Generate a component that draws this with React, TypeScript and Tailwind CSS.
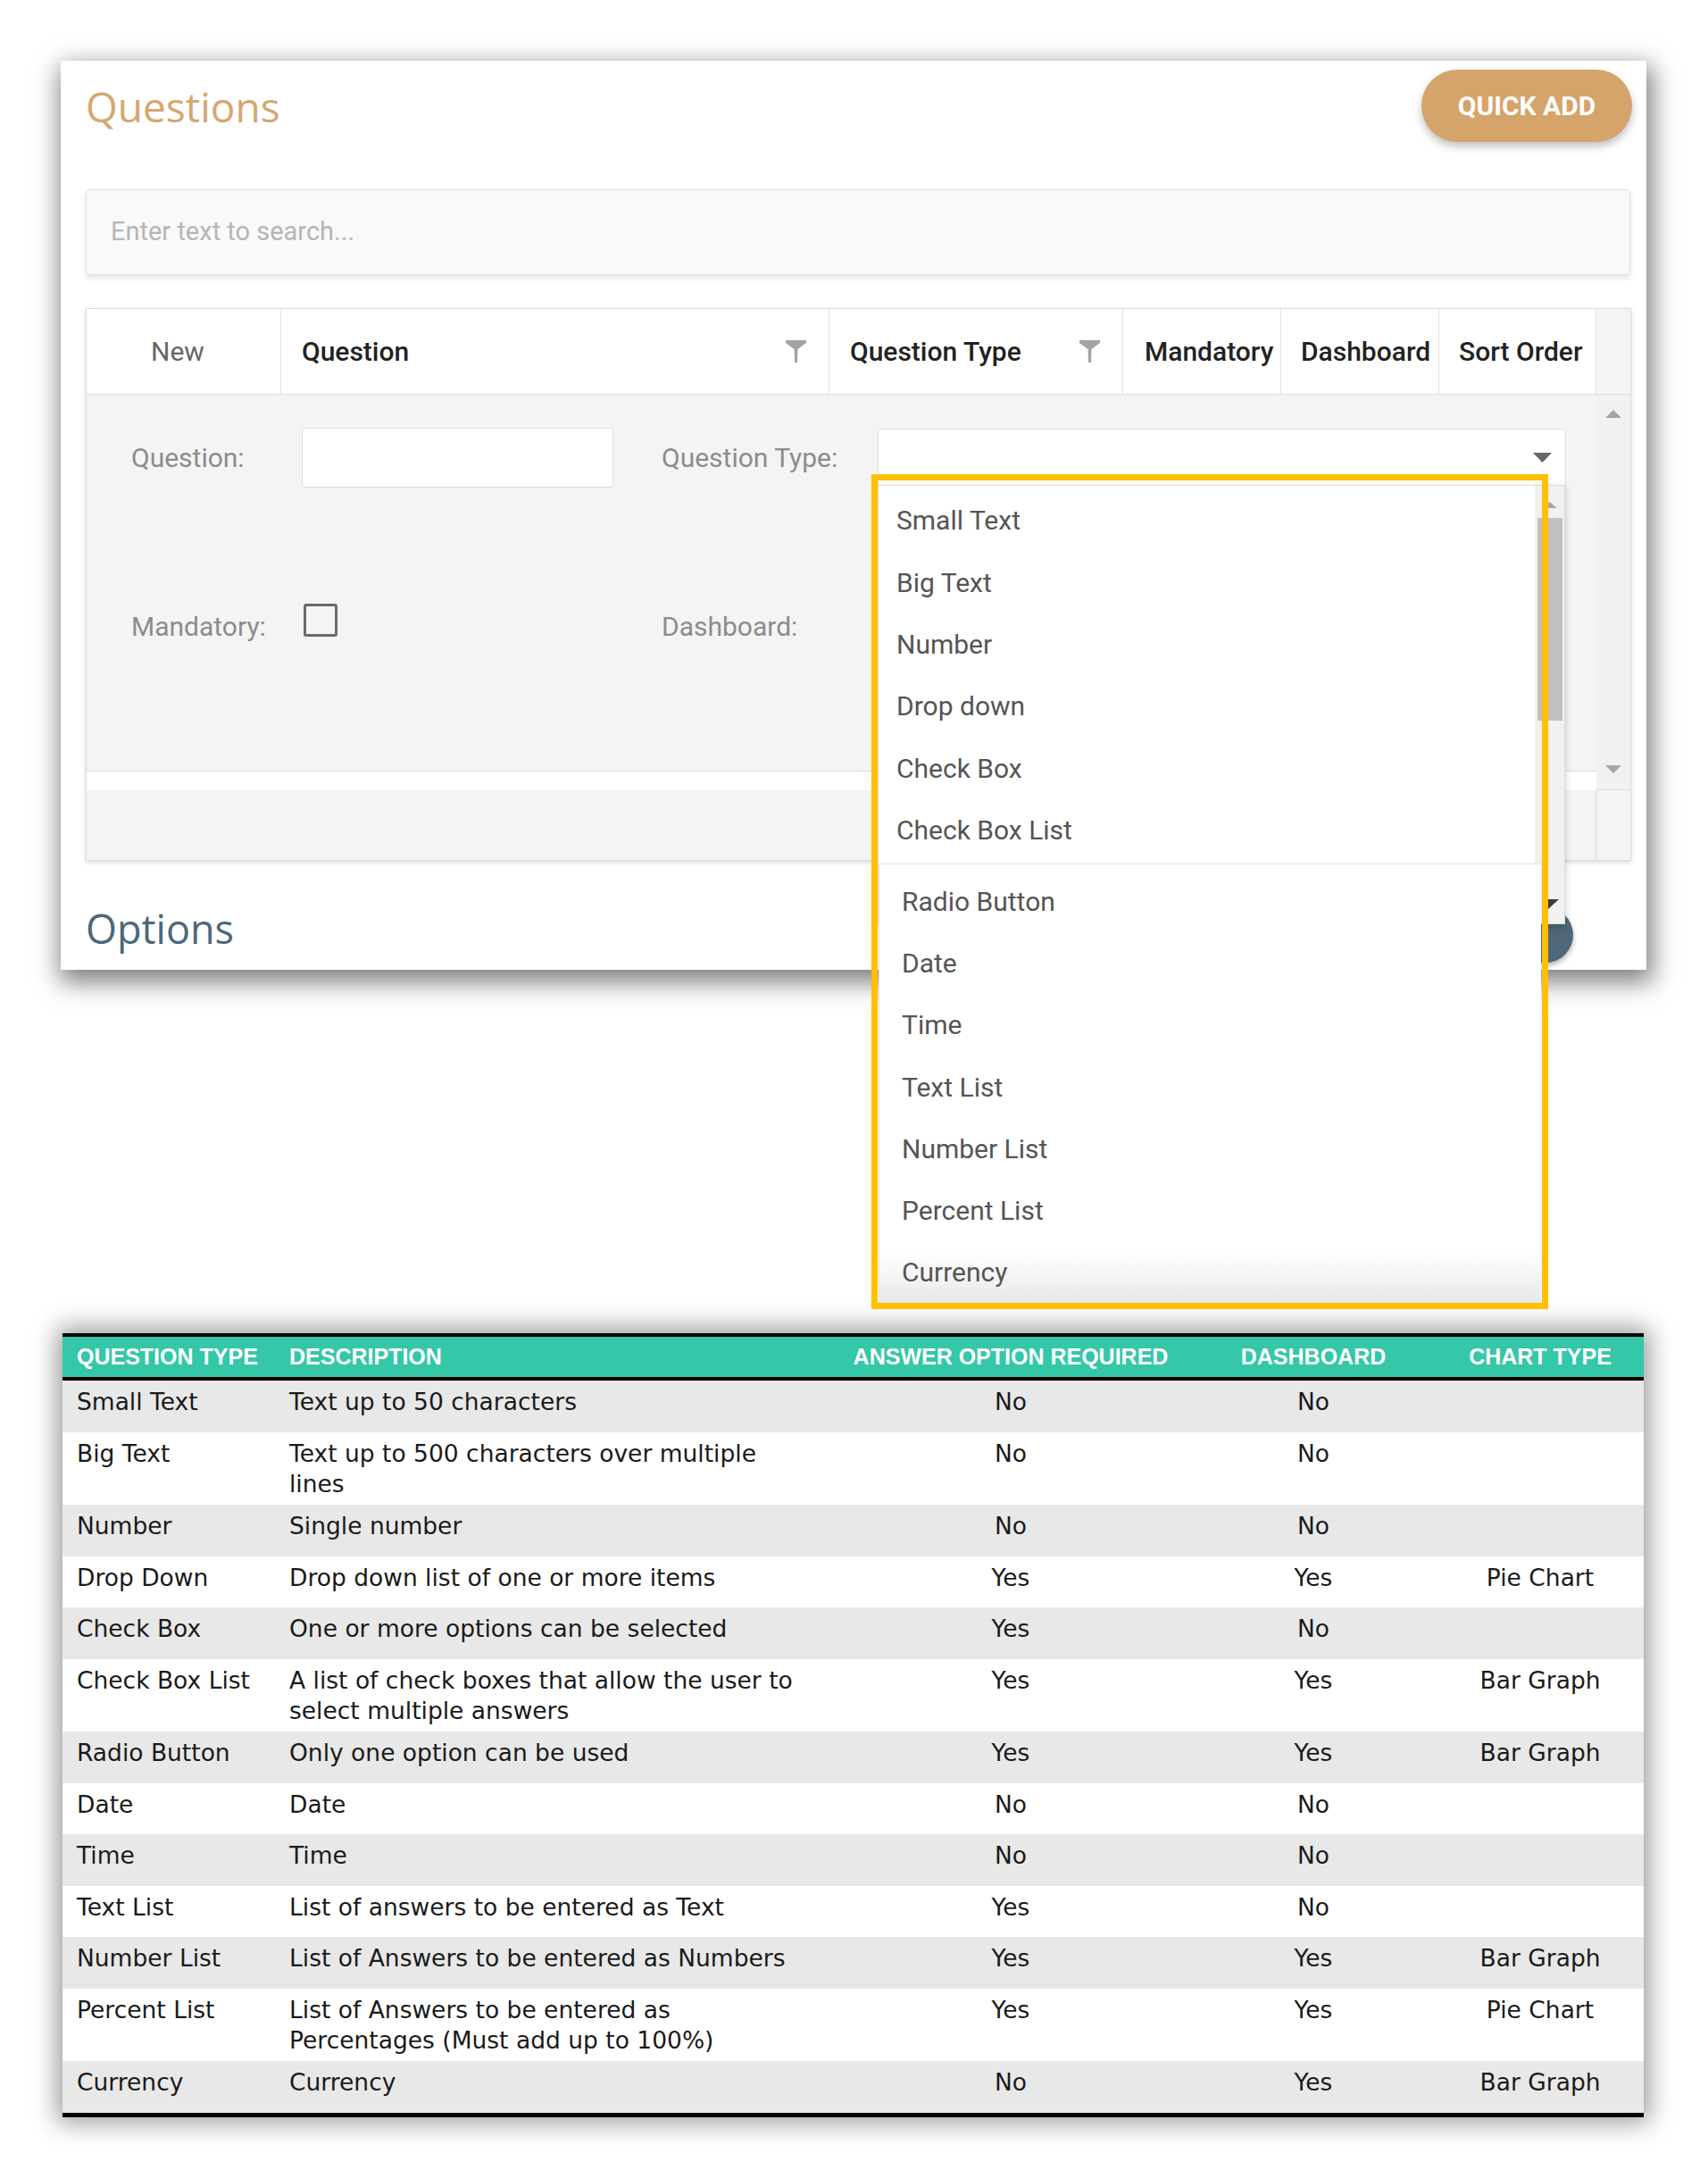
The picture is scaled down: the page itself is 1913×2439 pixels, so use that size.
import React from "react";

type Row = {
  type: string;
  desc: string[];
  req: string;
  dash: string;
  chart: string;
};

const ROWS: Row[] = [
  { type: "Small Text", desc: ["Text up to 50 characters"], req: "No", dash: "No", chart: "" },
  { type: "Big Text", desc: ["Text up to 500 characters over multiple", "lines"], req: "No", dash: "No", chart: "" },
  { type: "Number", desc: ["Single number"], req: "No", dash: "No", chart: "" },
  { type: "Drop Down", desc: ["Drop down list of one or more items"], req: "Yes", dash: "Yes", chart: "Pie Chart" },
  { type: "Check Box", desc: ["One or more options can be selected"], req: "Yes", dash: "No", chart: "" },
  { type: "Check Box List", desc: ["A list of check boxes that allow the user to", "select multiple answers"], req: "Yes", dash: "Yes", chart: "Bar Graph" },
  { type: "Radio Button", desc: ["Only one option can be used"], req: "Yes", dash: "Yes", chart: "Bar Graph" },
  { type: "Date", desc: ["Date"], req: "No", dash: "No", chart: "" },
  { type: "Time", desc: ["Time"], req: "No", dash: "No", chart: "" },
  { type: "Text List", desc: ["List of answers to be entered as Text"], req: "Yes", dash: "No", chart: "" },
  { type: "Number List", desc: ["List of Answers to be entered as Numbers"], req: "Yes", dash: "Yes", chart: "Bar Graph" },
  { type: "Percent List", desc: ["List of Answers to be entered as", "Percentages (Must add up to 100%)"], req: "Yes", dash: "Yes", chart: "Pie Chart" },
  { type: "Currency", desc: ["Currency"], req: "No", dash: "Yes", chart: "Bar Graph" },
];

const LIST_TOP = ["Small Text", "Big Text", "Number", "Drop down", "Check Box", "Check Box List"];
const LIST_BOTTOM = ["Radio Button", "Date", "Time", "Text List", "Number List", "Percent List", "Currency"];

function Funnel() {
  return (
    <svg width="23" height="25" viewBox="0 0 23 25">
      <polygon points="0,0 23,0 23,3 13.5,10 13,25 10,25 9.5,10 0,3" fill="#a3a3a3" />
    </svg>
  );
}

function Arrow({ up, color, w, h }: { up?: boolean; color: string; w: number; h: number }) {
  return (
    <svg width={w} height={h} viewBox={`0 0 ${w} ${h}`}>
      {up ? (
        <polygon points={`0,${h} ${w},${h} ${w / 2},0`} fill={color} />
      ) : (
        <polygon points={`0,0 ${w},0 ${w / 2},${h}`} fill={color} />
      )}
    </svg>
  );
}

function HeaderCell({ label, width, filter }: { label: string; width: string; filter?: boolean }) {
  return (
    <div className={`${width} flex h-full items-center justify-between border-r border-[#e2e2e2] pl-[23px] pr-[25px]`}>
      <span className="text-[30px] font-medium text-[#222]">{label}</span>
      {filter && <Funnel />}
    </div>
  );
}

function QuestionsCard() {
  return (
    <div className="relative flex h-[1018px] w-[1776px] flex-col bg-white pl-[28px] pr-[18px] font-['Roboto',sans-serif] shadow-[3px_10px_26px_4px_rgba(0,0,0,0.5)]">
      {/* Title + quick add */}
      <div className="flex items-center justify-between pt-[10px]">
        <h1 className="font-['Open_Sans',sans-serif] text-[46px] leading-[62px] text-[#d5a670]">Questions</h1>
        <button className="mr-[-2px] flex h-[81px] w-[236px] items-center justify-center rounded-full bg-[#d4a46b] text-[30px] font-bold text-white shadow-[0_5px_10px_rgba(0,0,0,0.25)]">
          QUICK ADD
        </button>
      </div>

      {/* Search */}
      <div className="mt-[53px] flex h-[96px] items-center rounded-[5px] border border-[#e3e3e3] bg-[#f9f9f9] pl-[27px] shadow-[0_3px_6px_rgba(0,0,0,0.12)]">
        <span className="text-[29px] text-[#b5b5b5]">Enter text to search...</span>
      </div>

      {/* Grid */}
      <div className="mt-[37px] flex w-[1731px] flex-col border border-[#dcdcdc] bg-white shadow-[0_2px_5px_rgba(0,0,0,0.15)]">
        <div className="flex h-[96px] border-b border-[#dcdcdc]">
          <div className="flex h-full w-[218px] items-center border-r border-[#e2e2e2] pl-[72px]">
            <span className="text-[30px] text-[#666]">New</span>
          </div>
          <HeaderCell label="Question" width="w-[614px]" filter />
          <HeaderCell label="Question Type" width="w-[329px]" filter />
          <div className="flex h-full w-[177px] items-center border-r border-[#e2e2e2] pl-[24px]">
            <span className="text-[30px] font-medium text-[#222]">Mandatory</span>
          </div>
          <div className="flex h-full w-[177px] items-center border-r border-[#e2e2e2] pl-[22px]">
            <span className="text-[30px] font-medium text-[#222]">Dashboard</span>
          </div>
          <div className="flex h-full w-[176px] items-center border-r border-[#e2e2e2] pl-[22px]">
            <span className="text-[30px] font-medium text-[#222]">Sort Order</span>
          </div>
          <div className="h-full flex-1 bg-[#f4f4f4]" />
        </div>

        <div className="flex h-[443px]">
          <div className="flex w-[1691px] flex-col">
            <div className="h-[422px] border-b border-[#dcdcdc] bg-[#f4f4f4] pl-[50px] pt-[37px] text-[30px] text-[#8c8c8c]">
              <div className="flex h-[67px] items-center">
                <span className="w-[191px]">Question:</span>
                <div className="h-[67px] w-[349px] rounded-[3px] border border-[#dedede] bg-white" />
                <span className="ml-[54px] w-[242px]">Question Type:</span>
                <div className="flex h-[66px] w-[771px] items-center justify-end rounded-[3px] border border-[#dedede] bg-white pr-[15px]">
                  <Arrow color="#666" w={21} h={11} />
                </div>
              </div>
              <div className="mt-[130px] flex items-start">
                <span className="w-[191px] leading-[52px]">Mandatory:</span>
                <div className="ml-[2px] h-[37px] w-[38px] rounded-[3px] border-[3px] border-[#6a6a6a]" />
                <span className="ml-[363px] leading-[52px]">Dashboard:</span>
              </div>
            </div>
            <div className="flex-1 bg-white" />
          </div>
          <div className="flex flex-1 flex-col items-center justify-between border-b border-[#dcdcdc] bg-[#f1f1f1] pb-[18px] pt-[17px]">
            <Arrow up color="#a5a5a5" w={18} h={9} />
            <Arrow color="#a5a5a5" w={18} h={9} />
          </div>
        </div>

        <div className="flex h-[78px] bg-[#f4f4f4]">
          <div className="w-[1691px] border-r border-[#dcdcdc]" />
        </div>
      </div>

      <h2 className="mt-[46px] font-['Open_Sans',sans-serif] text-[45px] leading-[60px] text-[#4b6879]">Options</h2>

      {/* floating action button partly hidden by the list */}
      <div className="absolute left-[1632px] top-[948px] h-[62px] w-[62px] rounded-full bg-[#4f6778] shadow-[0_3px_6px_rgba(0,0,0,0.3)]" />
    </div>
  );
}

function TypeDropdown() {
  return (
    <>
      {/* first view of the list */}
      <div className="absolute left-[983px] top-[543px] flex h-[492px] w-[770px] border border-[#dddddd] bg-white font-['Roboto',sans-serif] shadow-[0_3px_8px_rgba(0,0,0,0.2)]">
        <div className="flex w-[735px] flex-col pt-[4px]">
          {LIST_TOP.map((t) => (
            <div key={t} className="flex h-[69.4px] items-center pl-[20px] text-[30px] text-[#555]">
              {t}
            </div>
          ))}
        </div>
        <div className="flex flex-1 flex-col items-center bg-[#f1f1f1] pt-[18px]">
          <Arrow up color="#a5a5a5" w={17} h={7} />
          <div className="mt-[11px] h-[227px] w-[28px] bg-[#c1c1c1]" />
        </div>
      </div>
      <svg className="absolute left-[1734px] top-[1007px]" width="12" height="11" viewBox="0 0 12 11">
        <polygon points="0,0 12,0 0,11" fill="#3d3d3d" />
      </svg>

      {/* second, scrolled view of the list */}
      <div className="absolute left-[984px] top-[967px] flex h-[496px] w-[742px] flex-col border-l border-t border-[#e0e0e0] bg-[linear-gradient(to_bottom,#ffffff_88%,#e6e6e6_100%)] pt-[7px] font-['Roboto',sans-serif]">
        {LIST_BOTTOM.map((t) => (
          <div key={t} className="flex h-[69.2px] items-center pl-[25px] text-[30px] text-[#555]">
            {t}
          </div>
        ))}
      </div>

      {/* highlight */}
      <div className="pointer-events-none absolute left-[976px] top-[531px] h-[935px] w-[758px] border-[7px] border-[#ffc000]" />
    </>
  );
}

function TypeTable() {
  return (
    <div className="ml-[70px] mt-[407px] w-[1771px] border-b-[5px] border-t-[4px] border-black bg-white font-['DejaVu_Sans',sans-serif] shadow-[0_0_26px_6px_rgba(0,0,0,0.4)]">
      <div className="grid h-[49px] grid-cols-[238px_623px_402px_276px_232px] items-center border-b-[4px] border-black bg-[#34c7a8] font-['Liberation_Sans',sans-serif] text-[25px] font-bold text-white">
        <span className="pl-[16px]">QUESTION TYPE</span>
        <span className="pl-[16px]">DESCRIPTION</span>
        <span className="text-center">ANSWER OPTION REQUIRED</span>
        <span className="text-center">DASHBOARD</span>
        <span className="text-center">CHART TYPE</span>
      </div>
      {ROWS.map((r, i) => (
        <div
          key={r.type}
          className={`grid grid-cols-[238px_623px_402px_276px_232px] pt-[7px] text-[26.5px] leading-[34px] text-[#1a1a1a] ${
            r.desc.length > 1 ? "h-[81.5px]" : "h-[57.5px]"
          } ${i % 2 === 0 ? "bg-[#e8e8e8]" : "bg-white"}`}
        >
          <span className="pl-[16px] whitespace-nowrap">{r.type}</span>
          <div className="flex flex-col pl-[16px] whitespace-nowrap">
            {r.desc.map((d) => (
              <span key={d}>{d}</span>
            ))}
          </div>
          <span className="text-center">{r.req}</span>
          <span className="text-center">{r.dash}</span>
          <span className="text-center">{r.chart}</span>
        </div>
      ))}
    </div>
  );
}

export default function App() {
  return (
    <div className="relative h-[2439px] w-[1913px] overflow-hidden bg-white">
      <div className="pl-[68px] pt-[68px]">
        <QuestionsCard />
      </div>
      <TypeTable />
      <TypeDropdown />
    </div>
  );
}
